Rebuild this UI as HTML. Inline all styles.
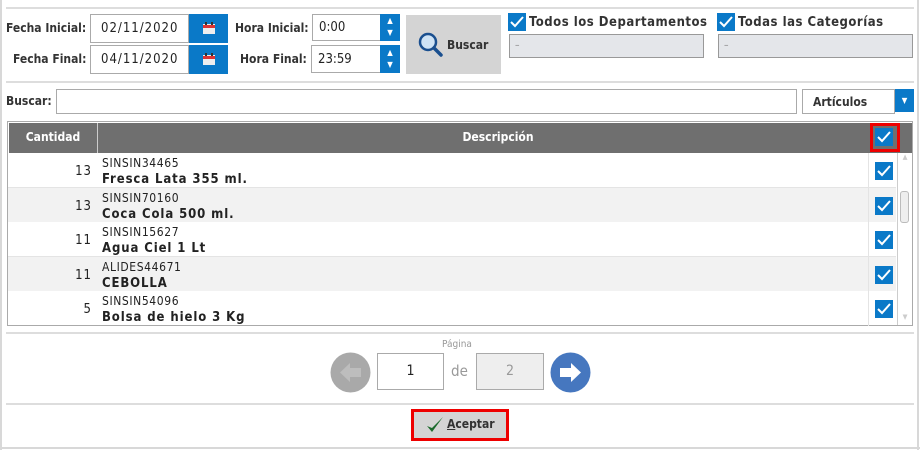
<!DOCTYPE html>
<html><head><meta charset="utf-8"><style>
*{box-sizing:border-box;margin:0;padding:0}
body{width:920px;height:450px;background:#fff;font-family:"DejaVu Sans Condensed","DejaVu Sans","Liberation Sans",sans-serif;font-stretch:condensed;font-size:12px;color:#222;position:relative;overflow:hidden}
.a{position:absolute}
.sep{position:absolute;left:6px;width:908px;height:2px;background:#ddd}
.lbl{position:absolute;font-weight:bold;font-size:12px;color:#333;white-space:nowrap}
.inp{position:absolute;background:#fff;border:1px solid #aaa;font-size:13px;color:#222;padding-left:10px;display:flex;align-items:center}
.blue{position:absolute;background:#0a79c8}
.cb{position:absolute;width:18px;height:18px;background:#0a79c8}
.row{position:absolute;left:8px;width:888px;height:35px;border-bottom:1px solid #e4e4e4}
.row .q{position:absolute;left:0;width:84px;text-align:right;top:11px;font-size:13px;letter-spacing:1px}
.row .d{position:absolute;left:94px;top:2px;font-size:12px;line-height:16px;letter-spacing:0.6px}
.row .d b{font-weight:bold;font-size:13px;letter-spacing:0.9px}
.row .c{position:absolute;left:860px;top:0;width:1px;height:35px;background:#e4e4e4}
</style></head><body>
<div class="a" style="left:0;top:0;width:2px;height:450px;background:#d8d8d8"></div>
<div class="a" style="left:917px;top:0;width:2px;height:450px;background:#d8d8d8"></div>
<div class="a" style="left:0;top:447px;width:920px;height:2px;background:#d8d8d8"></div>
<div class="sep" style="top:7px"></div>
<div class="sep" style="top:81px"></div>
<div class="sep" style="top:332px"></div>
<div class="sep" style="top:403px"></div>

<div class="lbl" style="left:6px;top:21px">Fecha Inicial:</div>
<div class="lbl" style="left:13px;top:52px">Fecha Final:</div>
<div class="inp" style="left:90px;top:14px;width:99px;height:29px;letter-spacing:1px">02/11/2020</div>
<div class="inp" style="left:90px;top:45px;width:99px;height:29px;letter-spacing:1px">04/11/2020</div>
<div class="blue" style="left:189px;top:14px;width:39px;height:29px"><svg width="39" height="29"><rect x="14" y="10" width="12" height="10" fill="#eee"/><rect x="14" y="11" width="12" height="3" fill="#d33"/><rect x="16" y="8" width="2" height="3" fill="#333"/><rect x="22" y="8" width="2" height="3" fill="#333"/></svg></div>
<div class="blue" style="left:189px;top:45px;width:39px;height:29px"><svg width="39" height="29"><rect x="14" y="10" width="12" height="10" fill="#eee"/><rect x="14" y="11" width="12" height="3" fill="#d33"/><rect x="16" y="8" width="2" height="3" fill="#333"/><rect x="22" y="8" width="2" height="3" fill="#333"/></svg></div>

<div class="lbl" style="left:235px;top:21px">Hora Inicial:</div>
<div class="lbl" style="left:240px;top:52px">Hora Final:</div>
<div class="inp" style="left:312px;top:14px;width:69px;height:27px;padding-left:6px">0:00</div>
<div class="inp" style="left:311px;top:45px;width:70px;height:28px;padding-left:6px">23:59</div>
<div class="blue" style="left:380px;top:14px;width:20px;height:27px;color:#fff;font-size:8px;text-align:center;line-height:12px;padding-top:1px">▲<br>▼</div>
<div class="blue" style="left:380px;top:45px;width:20px;height:28px;color:#fff;font-size:8px;text-align:center;line-height:12px;padding-top:2px">▲<br>▼</div>

<div class="a" style="left:406px;top:15px;width:95px;height:59px;background:#d4d4d4"></div>
<svg class="a" style="left:418px;top:32px" width="26" height="26"><circle cx="10" cy="10" r="8" fill="#cfe3f5" stroke="#1a4f8f" stroke-width="2.5"/><line x1="16" y1="16" x2="23" y2="23" stroke="#1a4f8f" stroke-width="3.5" stroke-linecap="round"/></svg>
<div class="lbl" style="left:447px;top:38px;color:#333">Buscar</div>

<div class="cb" style="left:508px;top:13px"><svg width="18" height="18"><path d="M3 9 L7 13 L15 4" stroke="#fff" stroke-width="2" fill="none"/></svg></div>
<div class="lbl" style="left:529px;top:15px;font-size:13px;letter-spacing:0.5px">Todos los Departamentos</div>
<div class="a" style="left:509px;top:34px;width:195px;height:24px;background:#e4e6ea;border:1px solid #999;color:#888;font-size:10px;padding:5px 0 0 5px">–</div>
<div class="cb" style="left:717px;top:13px"><svg width="18" height="18"><path d="M3 9 L7 13 L15 4" stroke="#fff" stroke-width="2" fill="none"/></svg></div>
<div class="lbl" style="left:738px;top:15px;font-size:13px;letter-spacing:0.5px">Todas las Categorías</div>
<div class="a" style="left:718px;top:34px;width:195px;height:24px;background:#e4e6ea;border:1px solid #999;color:#888;font-size:10px;padding:5px 0 0 5px">–</div>

<div class="lbl" style="left:6px;top:94px">Buscar:</div>
<div class="inp" style="left:56px;top:89px;width:741px;height:25px"></div>
<div class="inp" style="left:802px;top:89px;width:93px;height:25px;font-weight:bold;font-size:12px;color:#333">Artículos</div>
<div class="blue" style="left:895px;top:89px;width:19px;height:23px;color:#fff;font-size:8px;text-align:center;line-height:23px">▼</div>

<div class="a" style="left:7px;top:121px;width:906px;height:205px;border:1px solid #aaa"></div>
<div class="a" style="left:9px;top:123px;width:903px;height:30px;background:#6f6f6f"></div>
<div class="a" style="left:97px;top:123px;width:1px;height:30px;background:#ccc"></div>
<div class="a" style="left:9px;top:130px;width:88px;text-align:center;color:#fff;font-weight:bold">Cantidad</div>
<div class="a" style="left:98px;top:130px;width:800px;text-align:center;color:#fff;font-weight:bold">Descripción</div>
<div class="a" style="left:870px;top:123px;width:30px;height:29px;border:3px solid #e00;background:#6f6f6f"></div>
<div class="cb" style="left:875px;top:128px"><svg width="18" height="18"><path d="M3 9 L7 13 L15 4" stroke="#fff" stroke-width="2" fill="none"/></svg></div>

<div class="row" style="top:153px;background:#fff"><div class="q">13</div><div class="d">SINSIN34465<br><b>Fresca Lata 355 ml.</b></div><div class="c"></div></div>
<div class="row" style="top:188px;background:#f2f2f2"><div class="q">13</div><div class="d">SINSIN70160<br><b>Coca Cola 500 ml.</b></div><div class="c"></div></div>
<div class="row" style="top:222px;background:#fff"><div class="q">11</div><div class="d">SINSIN15627<br><b>Agua Ciel 1 Lt</b></div><div class="c"></div></div>
<div class="row" style="top:257px;background:#f2f2f2"><div class="q">11</div><div class="d">ALIDES44671<br><b>CEBOLLA</b></div><div class="c"></div></div>
<div class="row" style="top:291px;height:34px;background:#fff;border:0"><div class="q">5</div><div class="d">SINSIN54096<br><b>Bolsa de hielo 3 Kg</b></div><div class="c"></div></div>
<div class="cb" style="left:875px;top:162px"><svg width="18" height="18"><path d="M3 9 L7 13 L15 4" stroke="#fff" stroke-width="2" fill="none"/></svg></div>
<div class="cb" style="left:875px;top:197px"><svg width="18" height="18"><path d="M3 9 L7 13 L15 4" stroke="#fff" stroke-width="2" fill="none"/></svg></div>
<div class="cb" style="left:875px;top:231px"><svg width="18" height="18"><path d="M3 9 L7 13 L15 4" stroke="#fff" stroke-width="2" fill="none"/></svg></div>
<div class="cb" style="left:875px;top:266px"><svg width="18" height="18"><path d="M3 9 L7 13 L15 4" stroke="#fff" stroke-width="2" fill="none"/></svg></div>
<div class="cb" style="left:875px;top:300px"><svg width="18" height="18"><path d="M3 9 L7 13 L15 4" stroke="#fff" stroke-width="2" fill="none"/></svg></div>
<div class="a" style="left:897px;top:153px;width:1px;height:172px;background:#ccc"></div>
<div class="a" style="left:898px;top:153px;width:14px;height:172px;background:#fff;color:#ccc;font-size:7px;text-align:center">▲</div>
<div class="a" style="left:900px;top:191px;width:9px;height:32px;border:1px solid #bbb;border-radius:3px;background:#eee"></div>
<div class="a" style="left:898px;top:313px;width:14px;color:#ccc;font-size:7px;text-align:center">▼</div>

<div class="a" style="left:442px;top:339px;font-size:10px;color:#999">Página</div>
<svg class="a" style="left:330px;top:352px" width="41" height="41"><circle cx="20.5" cy="20.5" r="20" fill="#a9a9a9"/><path d="M10 20.5 L20 11 L20 16 L31 16 L31 25 L20 25 L20 30 Z" fill="#bdbdbd"/></svg>
<div class="a" style="left:377px;top:353px;width:67px;height:37px;border:1px solid #aaa;text-align:center;line-height:35px;font-size:14px">1</div>
<div class="a" style="left:451px;top:362px;font-size:15px;color:#999">de</div>
<div class="a" style="left:476px;top:353px;width:68px;height:37px;border:1px solid #aaa;background:#eee;text-align:center;line-height:35px;font-size:14px;color:#999">2</div>
<svg class="a" style="left:550px;top:352px" width="41" height="41"><circle cx="20.5" cy="20.5" r="20" fill="#4677bf"/><path d="M31 20.5 L21 11 L21 16 L10 16 L10 25 L21 25 L21 30 Z" fill="#fff"/></svg>

<div class="a" style="left:411px;top:409px;width:98px;height:32px;border:3px solid #e00;background:#d4d4d4"></div>
<svg class="a" style="left:425px;top:415px" width="20" height="20"><path d="M2 11 L7 17 L18 2 L7 13 Z" fill="#1b6a2c"/></svg>
<div class="lbl" style="left:447px;top:417px;font-size:12px"><u>A</u>ceptar</div>
</body></html>
